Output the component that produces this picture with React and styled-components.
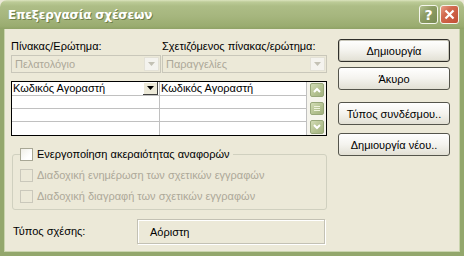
import React from "react";
import { styled, createGlobalStyle } from "styled-components";

const GlobalStyle = createGlobalStyle`
  html, body {
    margin: 0;
    padding: 0;
    background: #ffffff;
  }
  body {
    font-family: "Liberation Sans", "DejaVu Sans", sans-serif;
    font-size: 11px;
    color: #000000;
  }
`;

const rows = [
  { left: "Κωδικός Αγοραστή", right: "Κωδικός Αγοραστή" },
  { left: "", right: "" },
  { left: "", right: "" },
  { left: "", right: "" },
];

const options = [
  { label: "Ενεργοποίηση ακεραιότητας αναφορών", disabled: false },
  { label: "Διαδοχική ενημέρωση των σχετικών εγγραφών", disabled: true },
  { label: "Διαδοχική διαγραφή των σχετικών εγγραφών", disabled: true },
];

const Arrow = ({ up, color = "#000" }) => (
  <svg width="7" height="4" viewBox="0 0 7 4">
    <path d={up ? "M0 4 L3.5 0 L7 4 Z" : "M0 0 L7 0 L3.5 4 Z"} fill={color} />
  </svg>
);

const Chevron = ({ up }) => (
  <svg width="8" height="6" viewBox="0 0 8 6">
    <path
      d={up ? "M1 5 L4 2 L7 5" : "M1 1 L4 4 L7 1"}
      fill="none"
      stroke="#ffffff"
      strokeWidth="2"
    />
  </svg>
);

const App = () => {
  return (
    <>
      <GlobalStyle />
      <Window>
        <TitleBar>
          <Title>Επεξεργασία σχέσεων</Title>
          <Controls>
            <CaptionButton>?</CaptionButton>
            <CaptionButton $close>
              <svg width="11" height="11" viewBox="0 0 11 11">
                <path d="M1.5 1.5 L9.5 9.5 M9.5 1.5 L1.5 9.5" stroke="#fff" strokeWidth="2.2" />
              </svg>
            </CaptionButton>
          </Controls>
        </TitleBar>
        <Frame>
          <Main>
            <Fields>
              <Label>Πίνακας/Ερώτημα:</Label>
              <Label>Σχετιζόμενος πίνακας/ερώτημα:</Label>
              <Combo>
                <span>Πελατολόγιο</span>
                <ComboButton>
                  <Arrow color="#c3c1b4" />
                </ComboButton>
              </Combo>
              <Combo>
                <span>Παραγγελίες</span>
                <ComboButton>
                  <Arrow color="#c3c1b4" />
                </ComboButton>
              </Combo>
            </Fields>
            <Table>
              <Cells>
                {rows.map((row, i) => (
                  <Row key={i}>
                    <Cell>
                      {row.left}
                      {i === 0 && (
                        <CellDrop>
                          <Arrow />
                        </CellDrop>
                      )}
                    </Cell>
                    <Cell $last>{row.right}</Cell>
                  </Row>
                ))}
              </Cells>
              <ScrollBar>
                <ScrollButton>
                  <Chevron up />
                </ScrollButton>
                <Thumb>
                  <svg width="6" height="6" viewBox="0 0 6 6">
                    <path d="M0 0.5 H6 M0 2.5 H6 M0 4.5 H6" stroke="#eef2dc" strokeWidth="1" />
                  </svg>
                </Thumb>
                <ScrollButton>
                  <Chevron />
                </ScrollButton>
              </ScrollBar>
            </Table>
            <Group>
              <Legend>
                <Box />
                <span>{options[0].label}</span>
              </Legend>
              {options.slice(1).map((opt) => (
                <Check key={opt.label} $disabled={opt.disabled}>
                  <Box $disabled={opt.disabled} />
                  <span>{opt.label}</span>
                </Check>
              ))}
            </Group>
            <TypeRow>
              <Label>Τύπος σχέσης:</Label>
              <TypeBox>Αόριστη</TypeBox>
            </TypeRow>
          </Main>
          <Side>
            <Button $default>Δημιουργία</Button>
            <Button>Άκυρο</Button>
            <Button $gap={12}>Τύπος συνδέσμου..</Button>
            <Button $gap={8}>Δημιουργία νέου..</Button>
          </Side>
        </Frame>
      </Window>
    </>
  );
};

const Window = styled.div`
  width: 464px;
  height: 256px;
  display: flex;
  flex-direction: column;
  background: #ece9d8;
  overflow: hidden;
`;

const TitleBar = styled.div`
  height: 29px;
  flex: none;
  display: flex;
  align-items: center;
  justify-content: space-between;
  padding: 0 5px 0 8px;
  box-sizing: border-box;
  border-radius: 7px 7px 0 0;
  background: linear-gradient(
    to bottom,
    #dbe4be 0px,
    #bccb97 2px,
    #adbd86 6px,
    #a6b67e 16px,
    #9aac70 26px,
    #8fa266 29px
  );
`;

const Title = styled.div`
  font-family: "DejaVu Sans", sans-serif;
  font-weight: bold;
  font-size: 12px;
  letter-spacing: -0.2px;
  color: #ffffff;
  text-shadow: 1px 1px 0 #6f7f4a;
`;

const Controls = styled.div`
  display: flex;
  gap: 2px;
`;

const CaptionButton = styled.div`
  width: 19px;
  height: 19px;
  box-sizing: border-box;
  border: 1px solid #f4f6ec;
  border-radius: 3px;
  display: flex;
  align-items: center;
  justify-content: center;
  color: #ffffff;
  font-family: "DejaVu Sans", sans-serif;
  font-weight: bold;
  font-size: 14px;
  background: ${(p) =>
    p.$close
      ? "linear-gradient(135deg, #e9a08a 0%, #d26a4f 35%, #c24e34 100%)"
      : "linear-gradient(135deg, #b3c090 0%, #8d9d65 40%, #7a8b53 100%)"};
`;

const Frame = styled.div`
  flex: 1;
  display: flex;
  padding: 11px 0 0 7px;
  border: 4px solid #93a76c;
  border-top: none;
  box-shadow: inset 1px 0 0 #c9d4ad, inset -1px 0 0 #c9d4ad, inset 0 -1px 0 #c9d4ad;
`;

const Main = styled.div`
  width: 316px;
  display: flex;
  flex-direction: column;
`;

const Fields = styled.div`
  display: grid;
  grid-template-columns: 150px 165px;
  column-gap: 1px;
  row-gap: 2px;
`;

const Label = styled.div`
  height: 13px;
  line-height: 13px;
  white-space: nowrap;
`;

const Combo = styled.div`
  height: 18px;
  box-sizing: border-box;
  border: 1px solid #c9c7ba;
  display: flex;
  align-items: center;
  justify-content: space-between;
  padding: 0 1px 0 3px;
  color: #aca899;
  background: #ece9d8;
`;

const ComboButton = styled.div`
  width: 15px;
  height: 14px;
  box-sizing: border-box;
  border: 1px solid #e3e1d6;
  background: #f4f3ee;
  display: flex;
  align-items: center;
  justify-content: center;
`;

const Table = styled.div`
  margin-top: 8px;
  height: 55px;
  box-sizing: border-box;
  border: 1px solid #000000;
  background: #ffffff;
  display: flex;
`;

const Cells = styled.div`
  flex: 1;
  display: flex;
  flex-direction: column;
  border-right: 1px solid #c0c0c0;
`;

const Row = styled.div`
  display: grid;
  grid-template-columns: 148px 1fr;
  height: 14px;
  border-bottom: 1px solid #c0c0c0;
  box-sizing: border-box;
  &:last-child {
    border-bottom: none;
  }
`;

const Cell = styled.div`
  position: relative;
  padding-left: 1px;
  line-height: 13px;
  white-space: nowrap;
  border-right: ${(p) => (p.$last ? "none" : "1px solid #c0c0c0")};
`;

const CellDrop = styled.div`
  position: absolute;
  right: 1px;
  top: 0;
  width: 15px;
  height: 13px;
  box-sizing: border-box;
  background: #ece9d8;
  border-right: 1px solid #404040;
  border-bottom: 1px solid #404040;
  box-shadow: inset 1px 1px 0 #ffffff;
  display: flex;
  align-items: center;
  justify-content: center;
`;

const ScrollBar = styled.div`
  width: 19px;
  display: flex;
  flex-direction: column;
  align-items: center;
  justify-content: space-between;
  padding: 1px 0;
  background: #f5f4ec;
`;

const ScrollButton = styled.div`
  width: 14px;
  height: 14px;
  box-sizing: border-box;
  border: 1px solid #98a87a;
  border-radius: 2px;
  background: linear-gradient(135deg, #d2dcb5 0%, #b2c08f 60%, #a3b27f 100%);
  display: flex;
  align-items: center;
  justify-content: center;
`;

const Thumb = styled(ScrollButton)`
  height: 13px;
`;

const Group = styled.fieldset`
  margin: 12px 0 0 1px;
  padding: 8px 0 6px 7px;
  border: 1px solid #d0d0bf;
  border-radius: 3px;
  display: flex;
  flex-direction: column;
  gap: 8px;
`;

const Legend = styled.legend`
  display: flex;
  align-items: center;
  gap: 4px;
  padding: 0 3px 0 0;
  margin-left: 0;
  line-height: 13px;
`;

const Check = styled.div`
  display: flex;
  align-items: center;
  gap: 4px;
  line-height: 13px;
  color: ${(p) => (p.$disabled ? "#aca899" : "#000")};
`;

const Box = styled.span`
  width: 13px;
  height: 13px;
  box-sizing: border-box;
  border: 1px solid ${(p) => (p.$disabled ? "#cac8bb" : "#a8a795")};
  background: ${(p) =>
    p.$disabled ? "#ece9d8" : "linear-gradient(135deg, #f0efe8 0%, #ffffff 70%)"};
  flex: none;
`;

const TypeRow = styled.div`
  display: flex;
  align-items: center;
  margin-top: 9px;
  padding-left: 2px;
  ${Label} {
    width: 124px;
  }
`;

const TypeBox = styled.div`
  width: 188px;
  height: 25px;
  box-sizing: border-box;
  border: 1px solid #c3c1b4;
  box-shadow: inset 1px 1px 0 #ffffff, 1px 1px 0 #ffffff;
  display: flex;
  align-items: center;
  padding-left: 12px;
`;

const Side = styled.div`
  margin-left: 11px;
  margin-top: -1px;
  display: flex;
  flex-direction: column;
`;

const Button = styled.div`
  width: 112px;
  height: 23px;
  margin-top: ${(p) => (p.$gap ? `${p.$gap}px` : "5px")};
  &:first-child {
    margin-top: 0;
  }
  box-sizing: border-box;
  border: 1px solid ${(p) => (p.$default ? "#2f2f2a" : "#55554c")};
  border-radius: 3px;
  background: linear-gradient(to bottom, #ffffff 0%, #f4f3ee 50%, #e2e0d4 100%);
  box-shadow: ${(p) => (p.$default ? "inset 0 0 0 1px #c9c7ba" : "none")};
  display: flex;
  align-items: center;
  justify-content: center;
  white-space: nowrap;
`;

export default App;
